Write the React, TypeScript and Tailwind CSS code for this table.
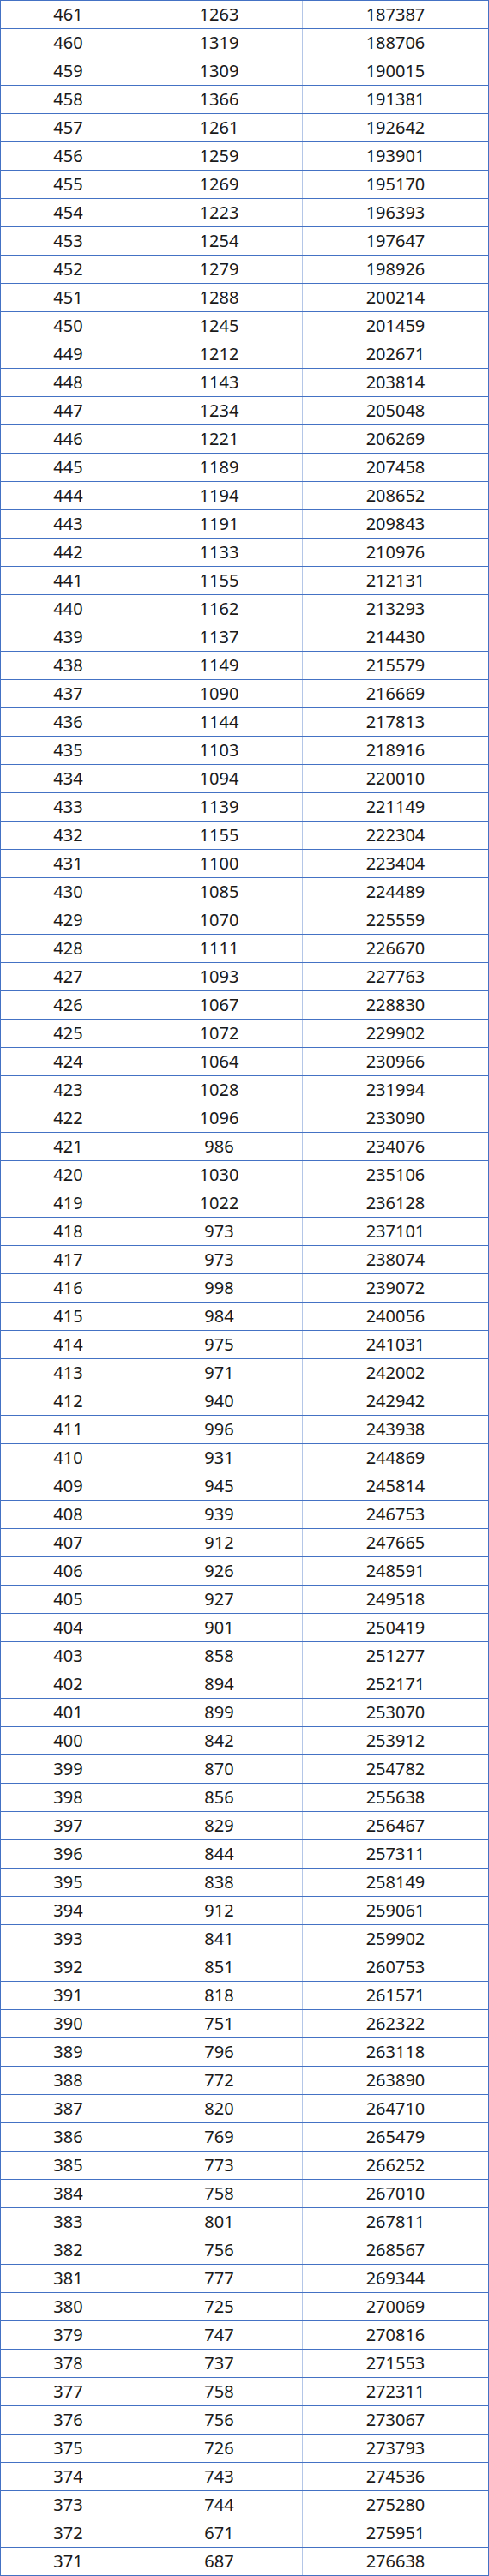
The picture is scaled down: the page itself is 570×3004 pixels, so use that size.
import React from 'react';

// score, count, cumulative
const rows: [number, number, number][] = [
  [461, 1263, 187387],
  [460, 1319, 188706],
  [459, 1309, 190015],
  [458, 1366, 191381],
  [457, 1261, 192642],
  [456, 1259, 193901],
  [455, 1269, 195170],
  [454, 1223, 196393],
  [453, 1254, 197647],
  [452, 1279, 198926],
  [451, 1288, 200214],
  [450, 1245, 201459],
  [449, 1212, 202671],
  [448, 1143, 203814],
  [447, 1234, 205048],
  [446, 1221, 206269],
  [445, 1189, 207458],
  [444, 1194, 208652],
  [443, 1191, 209843],
  [442, 1133, 210976],
  [441, 1155, 212131],
  [440, 1162, 213293],
  [439, 1137, 214430],
  [438, 1149, 215579],
  [437, 1090, 216669],
  [436, 1144, 217813],
  [435, 1103, 218916],
  [434, 1094, 220010],
  [433, 1139, 221149],
  [432, 1155, 222304],
  [431, 1100, 223404],
  [430, 1085, 224489],
  [429, 1070, 225559],
  [428, 1111, 226670],
  [427, 1093, 227763],
  [426, 1067, 228830],
  [425, 1072, 229902],
  [424, 1064, 230966],
  [423, 1028, 231994],
  [422, 1096, 233090],
  [421, 986, 234076],
  [420, 1030, 235106],
  [419, 1022, 236128],
  [418, 973, 237101],
  [417, 973, 238074],
  [416, 998, 239072],
  [415, 984, 240056],
  [414, 975, 241031],
  [413, 971, 242002],
  [412, 940, 242942],
  [411, 996, 243938],
  [410, 931, 244869],
  [409, 945, 245814],
  [408, 939, 246753],
  [407, 912, 247665],
  [406, 926, 248591],
  [405, 927, 249518],
  [404, 901, 250419],
  [403, 858, 251277],
  [402, 894, 252171],
  [401, 899, 253070],
  [400, 842, 253912],
  [399, 870, 254782],
  [398, 856, 255638],
  [397, 829, 256467],
  [396, 844, 257311],
  [395, 838, 258149],
  [394, 912, 259061],
  [393, 841, 259902],
  [392, 851, 260753],
  [391, 818, 261571],
  [390, 751, 262322],
  [389, 796, 263118],
  [388, 772, 263890],
  [387, 820, 264710],
  [386, 769, 265479],
  [385, 773, 266252],
  [384, 758, 267010],
  [383, 801, 267811],
  [382, 756, 268567],
  [381, 777, 269344],
  [380, 725, 270069],
  [379, 747, 270816],
  [378, 737, 271553],
  [377, 758, 272311],
  [376, 756, 273067],
  [375, 726, 273793],
  [374, 743, 274536],
  [373, 744, 275280],
  [372, 671, 275951],
  [371, 687, 276638],
];

const App: React.FC = () => {
  return (
    <div
      className="w-[570px] bg-white border-l border-t border-[#4472c4] text-[20px] text-[#1a1a1a]"
      style={{ fontFamily: '"Noto Sans", "Microsoft YaHei", "Noto Sans CJK SC", sans-serif' }}
    >
      {rows.map(([score, count, total]) => (
        <div key={score} className="flex h-[33px] border-b border-[#4472c4]">
          <div className="w-[158px] flex items-center justify-center border-r border-[#b4c6e7]">
            {score}
          </div>
          <div className="w-[194px] flex items-center justify-center border-r border-[#b4c6e7]">
            {count}
          </div>
          <div className="flex-1 flex items-center justify-center border-r border-[#4472c4]">
            {total}
          </div>
        </div>
      ))}
    </div>
  );
};

export default App;
